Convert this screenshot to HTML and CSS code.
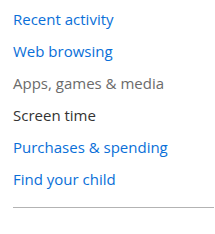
FILE: index.html
```html
<!DOCTYPE html>
<html lang="en">
<head>
    <meta charset="UTF-8">
    <link rel="stylesheet" href="styles.css">
    <title>Family settings</title>
</head>
<body>
    <!-- Family menu -->
    <div class="menu">
        <a class="menu_item link" href="#">Recent activity</a>
        <a class="menu_item link" href="#">Web browsing</a>
        <span class="menu_item muted">Apps, games &amp; media</span>
        <span class="menu_item current">Screen time</span>
        <a class="menu_item link" href="#">Purchases &amp; spending</a>
        <a class="menu_item link" href="#">Find your child</a>
    </div>
    <hr class="divider">
</body>
</html>
```

FILE: styles.css
```css
body {
    margin: 0;
    padding: 3px 0 0 13px;
    font-family: 'Open Sans', 'Noto Sans', sans-serif;
    background: #fff;
}

.menu {
    display: flex;
    flex-direction: column;
    align-items: flex-start;
}

.menu_item {
    font-size: 15px;
    line-height: 32px;
    text-decoration: none;
}

.link {
    color: #0a6fd8;
}

.muted {
    color: #6b6b6b;
}

.current {
    color: #333;
}

.divider {
    margin: 12px 1px 0 0;
    border: none;
    border-top: 1px solid #b3b3b3;
}
```
